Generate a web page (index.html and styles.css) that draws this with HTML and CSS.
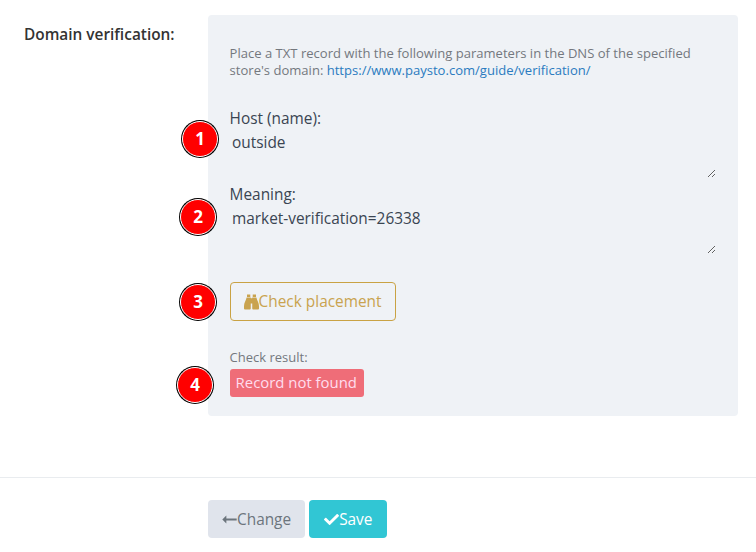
FILE: index.html
```html
<!DOCTYPE html>
<html lang="en">
<head>
    <meta charset="UTF-8">
    <title>Domain verification</title>
    <link rel="stylesheet" href="styles.css">
</head>
<body>
    <div class="form-row">
        <div class="form-label">Domain verification:</div>
        <div class="panel">
            <p class="hint">Place a TXT record with the following parameters in the DNS of the specified store's domain: <a href="#">https://www.paysto.com/guide/verification/</a></p>

            <label class="field-label">Host (name):</label>
            <textarea class="field-value">outside</textarea>

            <label class="field-label">Meaning:</label>
            <textarea class="field-value">market-verification=26338</textarea>

            <button class="btn btn-check">
                <svg class="icon" viewBox="0 0 16 16"><path fill="currentColor" d="M3.200 0H6.700V2.600H3.200zM9.300 0H12.800V2.600H9.300zM2.800 3.300H7.200V15A1 1 0 0 1 6.200 16H1A1 1 0 0 1 0 15V12.500C0 8.500 2 7 2.800 3.300zM8.800 3.300H13.200C14 7 16 8.500 16 12.500V15A1 1 0 0 1 15 16H9.800A1 1 0 0 1 8.800 15zM7.200 4H8.800V9.500H7.200z"/></svg>Check placement
            </button>

            <div class="result-label">Check result:</div>
            <span class="result-badge">Record not found</span>
        </div>
    </div>

    <div class="form-footer">
        <button class="btn btn-change">
            <svg class="icon-arrow" viewBox="0 0 16 10"><path fill="currentColor" d="M4.500 0.500V4H16V6H4.500V9.500L0 5z"/></svg>Change
        </button>
        <button class="btn btn-save">
            <svg class="icon-check" viewBox="0 0 512 512"><path fill="currentColor" d="M173.898 439.404l-166.4-166.4c-9.997-9.997-9.997-26.206 0-36.204l36.203-36.204c9.997-9.998 26.207-9.998 36.204 0L192 312.69 432.095 72.596c9.997-9.997 26.207-9.997 36.204 0l36.203 36.204c9.997 9.997 9.997 26.206 0 36.204l-294.4 294.401c-9.998 9.997-26.207 9.997-36.204-.001z"/></svg>Save
        </button>
    </div>

    <!-- numbered marks drawn over the screenshot -->
    <span class="mark mark-1">1</span>
    <span class="mark mark-2">2</span>
    <span class="mark mark-3">3</span>
    <span class="mark mark-4">4</span>
</body>
</html>
```
FILE: styles.css
```css
body {
    margin: 0;
    background-color: #fff;
    font-family: 'Open Sans', sans-serif;
    font-size: 16px;
    color: #3a4552;
    position: relative;
    height: 552px;
    overflow: hidden;
}
.form-row {
    display: flex;
    padding: 15px 18px 0 24px;
}
.form-label {
    width: 184px;
    flex-shrink: 0;
    padding-top: 10px;
    font-size: 15.4px;
    line-height: 20px;
    font-weight: 600;
    color: #333;
}
.panel {
    flex: 1;
    height: 401px;
    box-sizing: border-box;
    padding: 30px 22px 0 21.6px;
    background-color: #eff2f6;
    border-radius: 4px;
}
.hint {
    margin: 0 0 30px;
    font-size: 13.05px;
    line-height: 17px;
    color: #74787e;
}
.hint a {
    color: #2a7bc0;
    text-decoration: none;
}
.field-label {
    display: block;
    margin-bottom: 2px;
    font-size: 15.4px;
    line-height: 20px;
    color: #3a4552;
}
.field-value {
    display: block;
    box-sizing: border-box;
    width: 100%;
    height: 47px;
    margin: 0 0 7px;
    padding: 2px 2.4px;
    border: none;
    outline: none;
    background: transparent;
    font-family: inherit;
    font-size: 15.4px;
    line-height: 20px;
    color: #3a4552;
}
.btn {
    display: inline-flex;
    align-items: center;
    box-sizing: border-box;
    height: 38px;
    border-radius: 4px;
    font-family: inherit;
    font-size: 15.4px;
}
.btn-check {
    margin-top: 21px;
    height: 39px;
    padding: 0 13px;
    background: transparent;
    border: 1px solid #c9a244;
    color: #c9a34f;
}
.icon {
    width: 15px;
    height: 16px;
}
.result-label {
    margin-top: 27px;
    font-size: 13px;
    line-height: 18px;
    color: #74787e;
}
.result-badge {
    display: inline-block;
    margin-top: 3px;
    padding: 0 7px 0 6px;
    height: 28px;
    line-height: 27px;
    background-color: #ef6d78;
    border-radius: 3px;
    color: #fde;
    font-size: 14.9px;
}
.form-footer {
    margin-top: 61px;
    padding: 22px 0 0 208px;
    border-top: 1px solid #e9ecef;
    display: flex;
    gap: 4px;
}
.btn-change {
    padding: 0 14px;
    border: none;
    background-color: #e0e4ec;
    color: #6c757d;
}
.icon-arrow {
    width: 15px;
    height: 9px;
}
.btn-save {
    padding: 0 15px;
    border: none;
    background-color: #31c6d4;
    color: #fff;
}
.icon-check {
    width: 15px;
    height: 15px;
}
.mark {
    position: absolute;
    width: 34px;
    height: 34px;
    line-height: 34px;
    text-align: center;
    border-radius: 50%;
    background-color: #f00;
    border: 1px solid #fff;
    box-shadow: 0 0 0 1px #000;
    color: #fff;
    font-size: 17px;
    font-weight: 700;
}
.mark-1 { left: 182px; top: 121px; }
.mark-2 { left: 180px; top: 199px; }
.mark-3 { left: 180px; top: 284px; }
.mark-4 { left: 177px; top: 367px; }
```
